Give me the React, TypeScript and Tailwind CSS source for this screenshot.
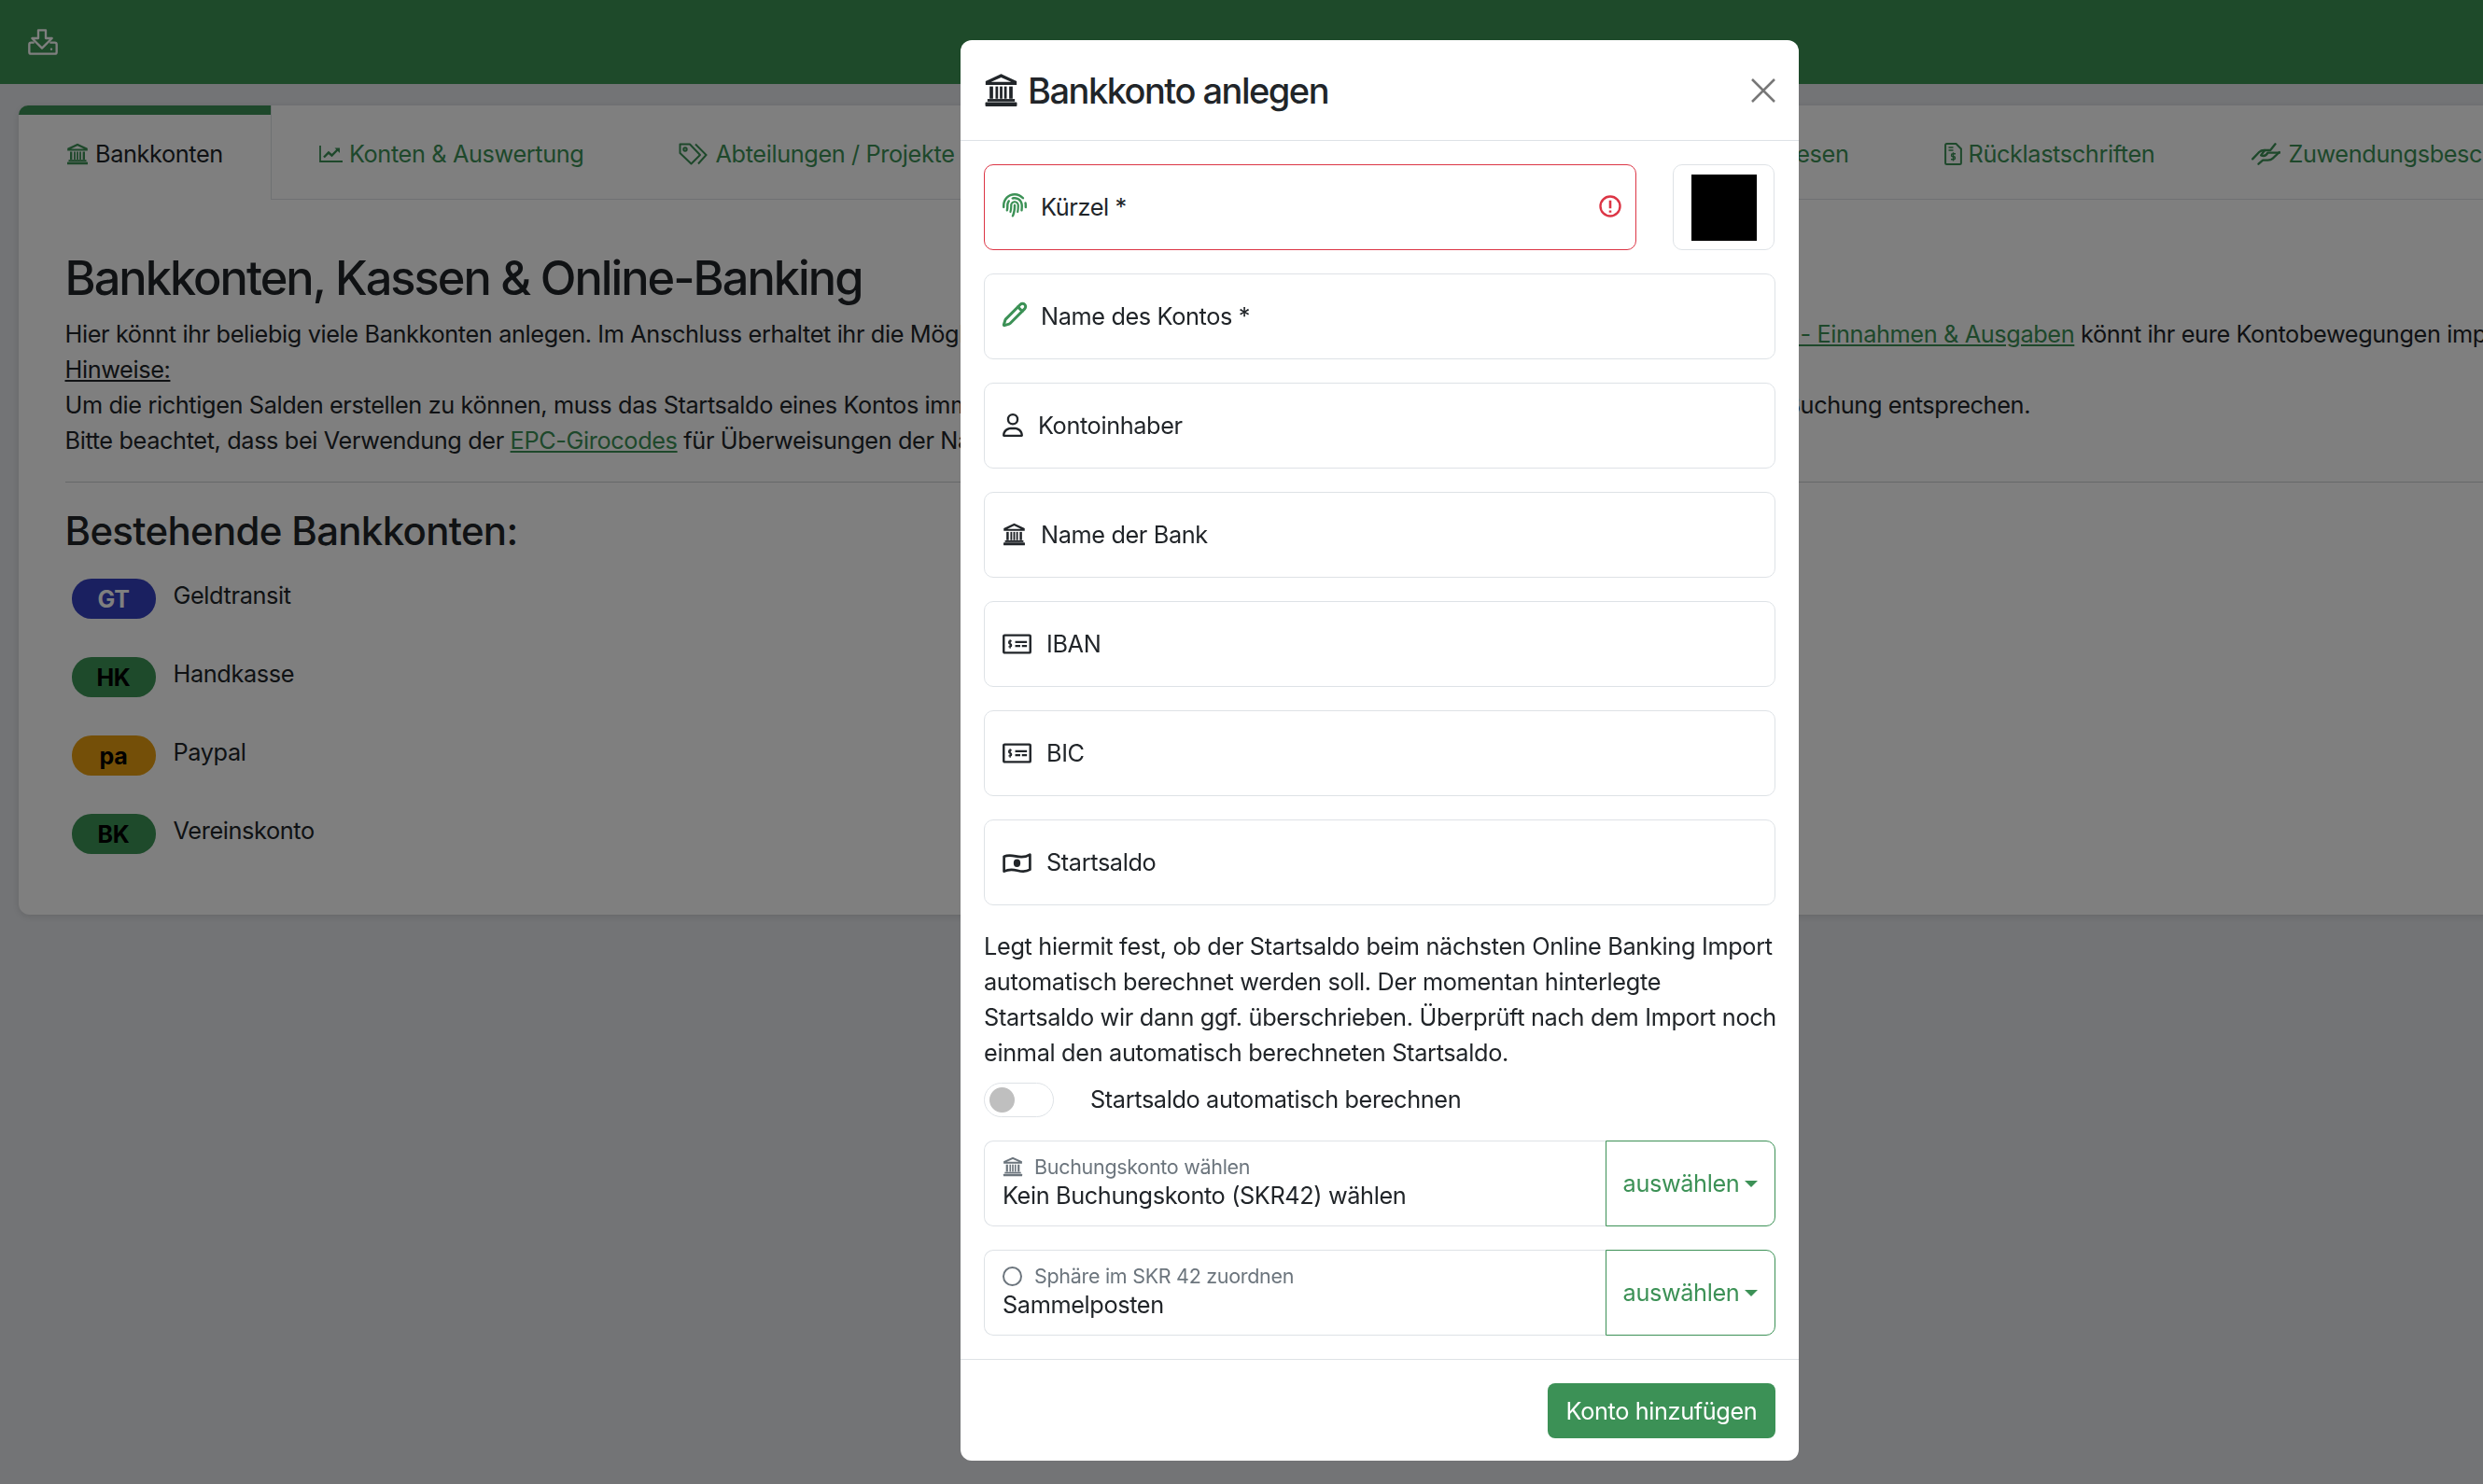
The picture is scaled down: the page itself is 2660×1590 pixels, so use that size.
import React from "react";
import { FaFingerprint, FaRegUser, FaRegCircle } from "react-icons/fa6";
import { LuPencil } from "react-icons/lu";

const Bank = ({ className = "" }: { className?: string }) => (
  <svg viewBox="0 0 24 24" className={className} fill="currentColor">
    <path d="M12 .8 1.200 5.800v2.600h21.600V5.800zM12 3.200l7 3.200H5z" />
    <rect x="4" y="9.500" width="2.400" height="8.500" />
    <rect x="8.100" y="9.500" width="1.800" height="8.500" />
    <rect x="11.100" y="9.500" width="1.800" height="8.500" />
    <rect x="14.100" y="9.500" width="1.800" height="8.500" />
    <rect x="17.600" y="9.500" width="2.400" height="8.500" />
    <rect x="2.500" y="18.200" width="19" height="1.800" />
    <rect x="1" y="20.500" width="22" height="2.800" rx=".6" />
  </svg>
);

const MoneyCheck = ({ className = "" }: { className?: string }) => (
  <svg viewBox="0 0 32 22" className={className} fill="none" stroke="currentColor">
    <rect x="1.300" y="1.300" width="29.400" height="19.400" rx="1" strokeWidth="2.500" />
    <path d="M10 7.600H8c-1.500 0-1.500 3.200 0 3.200h.8c1.500 0 1.500 3.200 0 3.200H6.600M8.400 6v9.800" strokeWidth="1.400" />
    <path d="M14 8.800h13M14 13.200h5.600M21.400 13.200h5.600" strokeWidth="2.200" />
  </svg>
);

const MoneyWave = ({ className = "" }: { className?: string }) => (
  <svg viewBox="0 0 32 24" className={className} fill="none" stroke="currentColor">
    <path d="M1.500 5c4-2 8-1.600 13-.4 5 1.200 11 1.400 16-1.800v16.700c-4 2.600-9 2.400-14 1.100-5-1.300-10-1.600-15 .9z" strokeWidth="2.800" strokeLinejoin="round" />
    <ellipse cx="16" cy="12.200" rx="3.800" ry="4.400" fill="currentColor" stroke="none" />
  </svg>
);

const ChartLine = ({ className = "" }: { className?: string }) => (
  <svg viewBox="0 0 25 18" className={className} fill="none" stroke="currentColor">
    <path d="M1 0v17h24" strokeWidth="1.800" />
    <path d="M5 12.500l5-5 3.500 3 6.500-6.500" strokeWidth="2.400" />
    <path d="M16.500 2.500H22V8z" fill="currentColor" stroke="none" />
  </svg>
);

const Tags = ({ className = "" }: { className?: string }) => (
  <svg viewBox="0 0 31 24" className={className} fill="none" stroke="currentColor" strokeWidth="2">
    <path d="M1.500 1.500h10.500l11 11.500-9.500 9.500L1.500 11z" strokeLinejoin="round" />
    <path d="M18 1.500l11.500 11.500-8.500 9.500" />
    <circle cx="7" cy="7" r="1.700" />
  </svg>
);

const Invoice = ({ className = "" }: { className?: string }) => (
  <svg viewBox="0 0 19 24" className={className} fill="none" stroke="currentColor">
    <path d="M1.100 2.500a1.500 1.500 0 0 1 1.500-1.500H12.500l5.400 5.500v15a1.500 1.500 0 0 1-1.500 1.500H2.600a1.500 1.500 0 0 1-1.500-1.500z" strokeWidth="2" />
    <path d="M4.500 5h5M4.500 8h5" strokeWidth="1.600" />
    <path d="M12 11.800H8.800c-1.700 0-1.700 3 0 3h1.400c1.700 0 1.700 3 0 3H7M9.500 10.200v9.200" strokeWidth="1.400" />
  </svg>
);

const Hands = ({ className = "" }: { className?: string }) => (
  <svg viewBox="0 0 92 72" className={className} fill="none" stroke="currentColor" strokeWidth="7" strokeLinecap="round" strokeLinejoin="round">
    <path d="M3 52 24 30Q30 24 40 24H60L76 4" />
    <path d="M42 24 30 40Q44 46 52 32H89" />
    <path d="M89 30 68 50Q62 56 52 56H36L22 68" />
  </svg>
);

const InboxIn = ({ className = "" }: { className?: string }) => (
  <svg viewBox="0 0 96 84" className={className} fill="none" stroke="currentColor" strokeWidth="7" strokeLinejoin="round">
    <path d="M33 4h24v26h20L45 62 13 30h20z" />
    <path d="M20 44H10a6 6 0 0 0-6 6v24a6 6 0 0 0 6 6h76a6 6 0 0 0 6-6V50a6 6 0 0 0-6-6H70" />
    <circle cx="75" cy="65" r="3.500" fill="currentColor" stroke="none" />
  </svg>
);

const ErrorCircle = ({ className = "" }: { className?: string }) => (
  <svg viewBox="0 0 24 24" className={className} fill="none" stroke="currentColor">
    <circle cx="12" cy="12" r="10.500" strokeWidth="2.400" />
    <path d="M12 5.800v8.400M12 16.400v2.400" strokeWidth="2.600" />
  </svg>
);

const Caret = () => <span className="ml-[6px] inline-block border-x-[7px] border-t-[7px] border-x-transparent border-t-[#3c9156]" />;

const Tab = ({ icon, label, active, className = "" }: { icon: React.ReactNode; label: string; active?: boolean; className?: string }) => (
  <div
    className={
      active
        ? "relative flex h-[101px] shrink-0 items-center rounded-tl-[12px] border-r-[1.700px] border-[#dee2e6] bg-white px-[51px] pt-[3px] text-[#212529]"
        : `flex h-[101px] shrink-0 items-center border-b-[1.700px] border-[#dee2e6] px-[51px] pt-[3px] text-[#3c9156] ${className}`
    }
  >
    {active && <span className="absolute inset-x-0 top-0 h-[10px] rounded-tl-[12px] bg-[#3c9156]" />}
    {icon}
    <span>{label}</span>
  </div>
);

const Field = ({ icon, label, iconClass }: { icon: React.ReactNode; label: string; iconClass?: string }) => (
  <div className="flex h-[92px] items-center rounded-[10px] border-[1.700px] border-[#dee2e6] bg-white pl-[19px]">
    <span className={`flex shrink-0 ${iconClass ?? "text-[#212529]"}`}>{icon}</span>
    <span>{label}</span>
  </div>
);

const SelectRow = ({ icon, label, value }: { icon: React.ReactNode; label: string; value: string }) => (
  <div className="flex h-[92px]">
    <div className="flex min-w-0 flex-1 flex-col rounded-l-[10px] border-[1.700px] border-r-0 border-[#dee2e6] bg-white pl-[19px] pt-[11px]">
      <div className="flex h-[32px] items-center text-[21.500px] leading-[32px] tracking-[-0.300px] text-[#6c757d]">
        <span className="flex w-[34px] shrink-0">{icon}</span>
        <span>{label}</span>
      </div>
      <div className="leading-[30px] text-[#212529]">{value}</div>
    </div>
    <div className="flex w-[182px] shrink-0 items-center justify-center rounded-r-[10px] border-[1.700px] border-[#3c9156] text-[#3c9156]">
      auswählen
      <Caret />
    </div>
  </div>
);

const Badge = ({ code, name, bg, fg }: { code: string; name: string; bg: string; fg: string }) => (
  <div className="flex h-[43px] items-start">
    <div className={`ml-[7px] flex h-[43px] w-[90px] items-center justify-center rounded-[21px] pt-[1px] text-[25px] font-bold ${bg} ${fg}`}>{code}</div>
    <div className="ml-[19px] -mt-[1px] leading-[38px]">{name}</div>
  </div>
);

export default function App() {
  return (
    <div className="relative h-[1590px] w-[2660px] overflow-hidden bg-[#e7e9ed] text-[25.300px] leading-[38px] tracking-[-0.380px] text-[#212529] [font-family:Inter,'Liberation_Sans',sans-serif]">
      <header className="flex h-[90px] items-center bg-[#3c9455] pl-[30px]">
        <InboxIn className="h-[28px] w-[32px] text-white" />
      </header>
      <main className="ml-[20px] mt-[23px] h-[867px] w-[2800px] rounded-[12px] bg-white shadow-[0_2px_8px_rgba(0,0,0,0.12)]">
        <nav className="flex h-[101px] items-stretch whitespace-nowrap">
          <Tab active icon={<Bank className="mr-[7px] h-[24px] w-[24px] text-[#3c9156]" />} label="Bankkonten" />
          <Tab icon={<ChartLine className="mr-[7px] h-[18px] w-[25px]" />} label="Konten & Auswertung" />
          <Tab icon={<Tags className="mr-[8px] h-[24px] w-[31px]" />} label="Abteilungen / Projekte" />
          <Tab className="w-[461px]" icon={null} label="Mitgliedsbeiträge" />
          <Tab className="w-[497px] justify-end" icon={null} label="Auslagen & Spesen" />
          <Tab icon={<Invoice className="mr-[7px] h-[24px] w-[19px]" />} label="Rücklastschriften" />
          <Tab className="!pl-[53px]" icon={<Hands className="mr-[8px] h-[24px] w-[31px]" />} label="Zuwendungsbescheinigungen" />
          <div className="flex-1 border-b-[1.700px] border-[#dee2e6]" />
        </nav>
        <section className="pl-[49.500px] pt-[54px]">
          <h1 className="text-[50.500px] font-medium leading-[60px] tracking-[-2px]">Bankkonten, Kassen &amp; Online-Banking</h1>
          <div className="mt-[11px] whitespace-nowrap">
            <p>
              Hier könnt ihr beliebig viele Bankkonten anlegen. Im Anschluss erhaltet ihr die Möglichkeit, eure Kontoauszüge automatisch einzulesen. Im Bereich <a className="text-[#3c9156] underline">Buchführung - Einnahmen &amp; Ausgaben</a> könnt ihr eure Kontobewegungen importieren und verwalten.
            </p>
            <p className="underline">Hinweise:</p>
            <p>Um die richtigen Salden erstellen zu können, muss das Startsaldo eines Kontos immer exakt dem tatsächlichen Kontostand vor der allerersten neu importierten Buchung entsprechen.</p>
            <p>
              Bitte beachtet, dass bei Verwendung der <a className="text-[#3c9156] underline">EPC-Girocodes</a> für Überweisungen der Name des Kontoinhabers hinterlegt sein muss.
            </p>
          </div>
          <hr className="mr-[100px] mt-[25px] border-t-[1.700px] border-[#cfd1d3]" />
          <h2 className="mt-[27px] text-[42px] font-medium leading-[50px] tracking-[-0.700px]">Bestehende Bankkonten:</h2>
          <div className="mt-[26px] flex flex-col gap-[41px]">
            <Badge code="GT" name="Geldtransit" bg="bg-[#3440c0]" fg="text-white" />
            <Badge code="HK" name="Handkasse" bg="bg-[#3c9557]" fg="text-black" />
            <Badge code="pa" name="Paypal" bg="bg-[#e99f10]" fg="text-black" />
            <Badge code="BK" name="Vereinskonto" bg="bg-[#3c9557]" fg="text-black" />
          </div>
        </section>
      </main>

      <div className="fixed inset-0 bg-black/50" />

      <div className="absolute left-[1029px] top-[43px] flex h-[1522px] w-[898px] flex-col rounded-[12px] bg-white">
        <div className="flex h-[108px] shrink-0 items-center justify-between border-b-[1.700px] border-[#dee2e6] px-[25px]">
          <div className="flex items-center">
            <Bank className="mr-[10px] h-[37px] w-[37px]" />
            <span className="text-[38px] font-medium leading-[46px] tracking-[-1.500px]">Bankkonto anlegen</span>
          </div>
          <svg viewBox="0 0 26 26" className="h-[26px] w-[26px] text-[#777]" fill="none" stroke="currentColor" strokeWidth="2.500">
            <path d="M1 1l24 24M25 1 1 25" />
          </svg>
        </div>
        <div className="flex flex-1 flex-col px-[25px] pt-[25px]">
          <div className="flex gap-[39px]">
            <div className="relative flex h-[92px] w-[699px] items-center rounded-[10px] border-[1.700px] border-[#dc3545] bg-white pl-[19px]">
              <span className="flex w-[41px] shrink-0 text-[#3c9156]"><FaFingerprint className="h-[26px] w-[26px] -translate-y-[2px]" /></span>
              <span>Kürzel *</span>
              <ErrorCircle className="absolute right-[15px] top-[32px] h-[24px] w-[24px] text-[#dc3545]" />
            </div>
            <div className="flex h-[92px] w-[109px] items-center justify-center rounded-[10px] border-[1.700px] border-[#dee2e6]">
              <div className="h-[71px] w-[70px] bg-black" />
            </div>
          </div>
          <div className="mt-[25px] flex flex-col gap-[25px]">
            <Field iconClass="w-[41px] text-[#3c9156]" icon={<LuPencil className="h-[28px] w-[28px] -translate-x-[1px] -translate-y-[2px]" strokeWidth={2.6} />} label="Name des Kontos *" />
            <Field iconClass="w-[38px]" icon={<FaRegUser className="h-[25px] w-[22px] -translate-y-[1px]" />} label="Kontoinhaber" />
            <Field iconClass="w-[41px]" icon={<Bank className="h-[25px] w-[25px] -translate-y-[1px]" />} label="Name der Bank" />
            <Field iconClass="w-[47px]" icon={<MoneyCheck className="h-[22px] w-[31px]" />} label="IBAN" />
            <Field iconClass="w-[47px]" icon={<MoneyCheck className="h-[22px] w-[31px]" />} label="BIC" />
            <Field iconClass="w-[47px]" icon={<MoneyWave className="h-[23px] w-[31px]" />} label="Startsaldo" />
          </div>
          <p className="mt-[25px] whitespace-nowrap tracking-[-0.330px]">
            Legt hiermit fest, ob der Startsaldo beim nächsten Online Banking Import
            <br />
            automatisch berechnet werden soll. Der momentan hinterlegte
            <br />
            Startsaldo wir dann ggf. überschrieben. Überprüft nach dem Import noch
            <br />
            einmal den automatisch berechneten Startsaldo.
          </p>
          <div className="mt-[12px] flex h-[38px] items-center">
            <span className="flex h-[37px] w-[75px] items-center rounded-full border-[1.700px] border-[#dee2e6] pl-[5px]">
              <span className="h-[27px] w-[27px] rounded-full bg-[#bfbfbf]" />
            </span>
            <span className="ml-[39px]">Startsaldo automatisch berechnen</span>
          </div>
          <div className="mt-[25px] flex flex-col gap-[25px]">
            <SelectRow icon={<Bank className="h-[22px] w-[22px] text-[#6c757d]" />} label="Buchungskonto wählen" value="Kein Buchungskonto (SKR42) wählen" />
            <SelectRow icon={<FaRegCircle className="h-[21px] w-[21px] text-[#6c757d]" />} label="Sphäre im SKR 42 zuordnen" value="Sammelposten" />
          </div>
        </div>
        <div className="flex h-[109px] shrink-0 items-center justify-end border-t-[1.700px] border-[#dee2e6] pr-[25px]">
          <button className="flex h-[59px] w-[244px] items-center justify-center rounded-[8px] bg-[#3c9156] pt-[2px] text-white">Konto hinzufügen</button>
        </div>
      </div>
    </div>
  );
}
